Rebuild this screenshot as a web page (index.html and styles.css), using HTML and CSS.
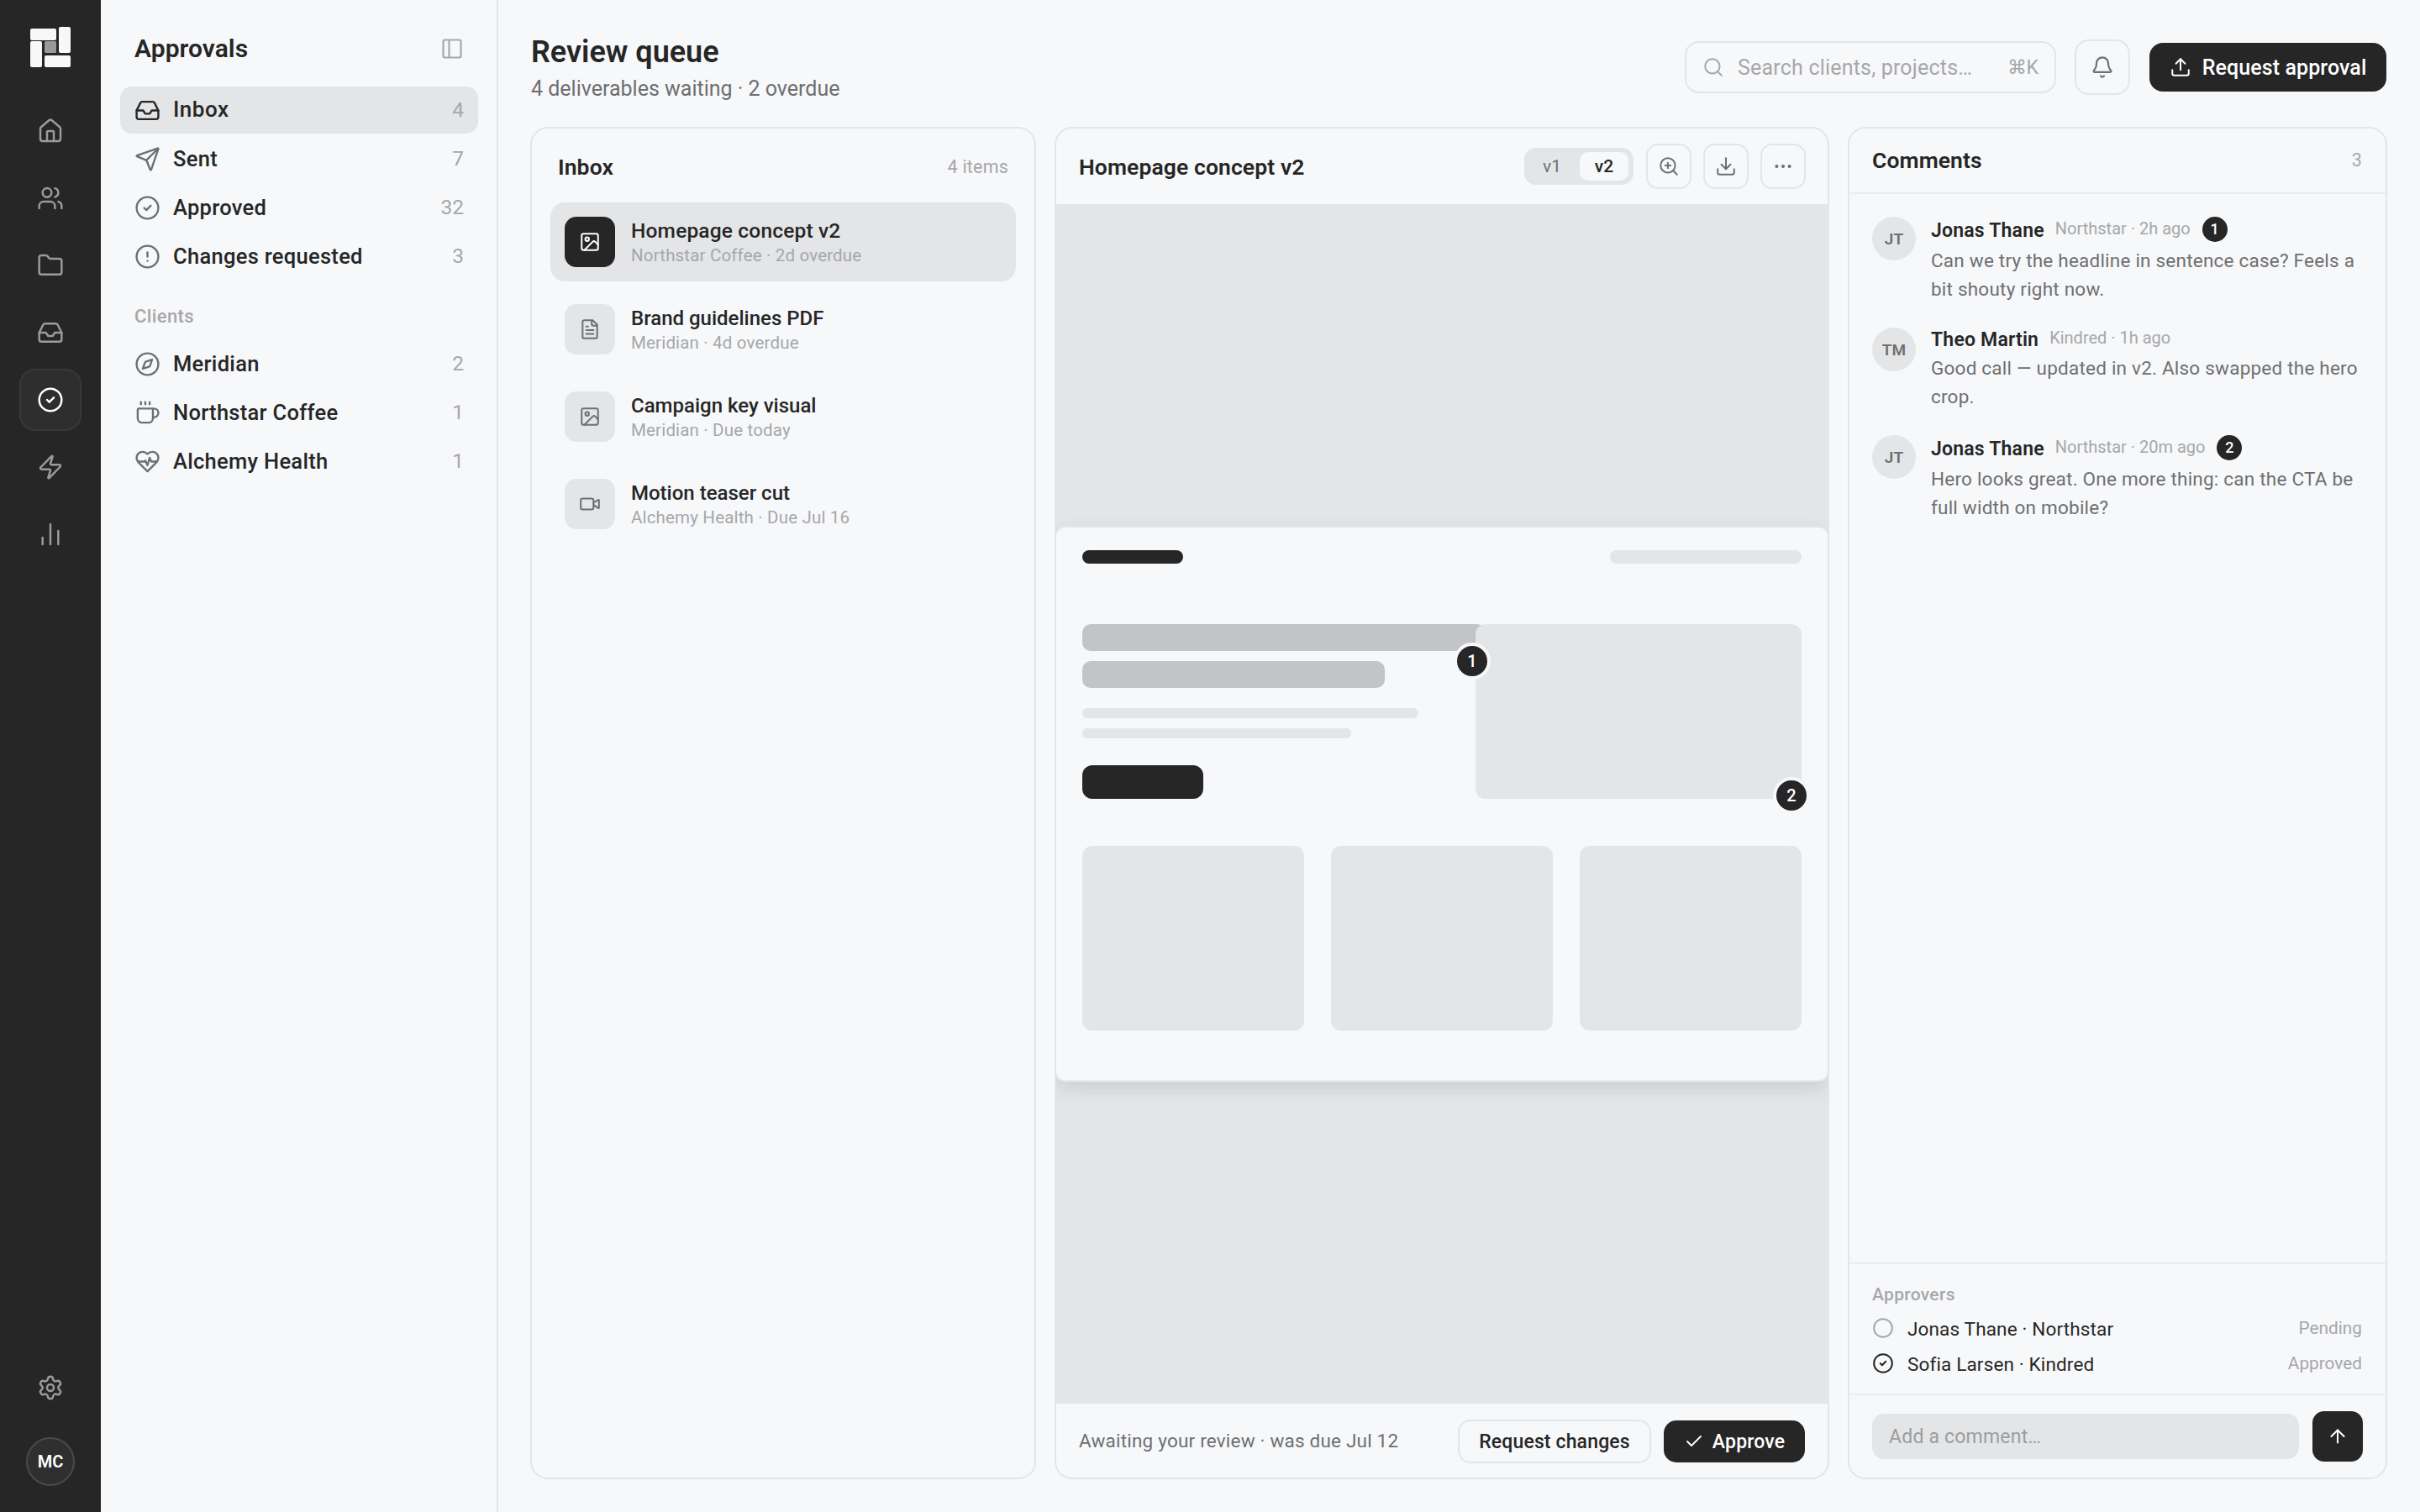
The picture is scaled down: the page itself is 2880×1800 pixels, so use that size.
FILE: index.html
```html
<!DOCTYPE html>
<html lang="en">
<head>
    <meta charset="UTF-8">
    <meta name="viewport" content="width=device-width, initial-scale=1.0">
    <title>Approvals</title>
    <link rel="stylesheet" href="styles.css">
</head>
<body>
    <svg class="sprite" aria-hidden="true">
        <symbol id="home" viewBox="0 0 24 24"><path d="M15 21v-8a1 1 0 0 0-1-1h-4a1 1 0 0 0-1 1v8"/><path d="M3 10a2 2 0 0 1 .709-1.528l7-5.999a2 2 0 0 1 2.582 0l7 5.999A2 2 0 0 1 21 10v9a2 2 0 0 1-2 2H5a2 2 0 0 1-2-2z"/></symbol>
        <symbol id="users" viewBox="0 0 24 24"><path d="M16 21v-2a4 4 0 0 0-4-4H6a4 4 0 0 0-4 4v2"/><circle cx="9" cy="7" r="4"/><path d="M22 21v-2a4 4 0 0 0-3-3.87"/><path d="M16 3.13a4 4 0 0 1 0 7.75"/></symbol>
        <symbol id="folder" viewBox="0 0 24 24"><path d="M20 20a2 2 0 0 0 2-2V8a2 2 0 0 0-2-2h-7.9a2 2 0 0 1-1.69-.9L9.6 3.9A2 2 0 0 0 7.93 3H4a2 2 0 0 0-2 2v13a2 2 0 0 0 2 2Z"/></symbol>
        <symbol id="inbox" viewBox="0 0 24 24"><path d="M22 12h-6l-2 3h-4l-2-3H2"/><path d="M5.45 5.11 2 12v6a2 2 0 0 0 2 2h16a2 2 0 0 0 2-2v-6l-3.45-6.89A2 2 0 0 0 16.76 4H7.24a2 2 0 0 0-1.79 1.11z"/></symbol>
        <symbol id="circle-check" viewBox="0 0 24 24"><circle cx="12" cy="12" r="10"/><path d="m9 12 2 2 4-4"/></symbol>
        <symbol id="circle" viewBox="0 0 24 24"><circle cx="12" cy="12" r="10"/></symbol>
        <symbol id="zap" viewBox="0 0 24 24"><path d="M4 14a1 1 0 0 1-.78-1.63l9.9-10.2a.5.5 0 0 1 .86.46l-1.92 6.02A1 1 0 0 0 13 10h7a1 1 0 0 1 .78 1.63l-9.9 10.2a.5.5 0 0 1-.86-.46l1.92-6.02A1 1 0 0 0 11 14z"/></symbol>
        <symbol id="bars" viewBox="0 0 24 24"><path d="M5 21v-6"/><path d="M12 21V3"/><path d="M19 21V9"/></symbol>
        <symbol id="settings" viewBox="0 0 24 24"><path d="M9.671 4.136a2.34 2.34 0 0 1 4.659 0 2.34 2.34 0 0 0 3.319 1.915 2.34 2.34 0 0 1 2.33 4.033 2.34 2.34 0 0 0 0 3.831 2.34 2.34 0 0 1-2.33 4.033 2.34 2.34 0 0 0-3.319 1.915 2.34 2.34 0 0 1-4.659 0 2.34 2.34 0 0 0-3.32-1.915 2.34 2.34 0 0 1-2.33-4.033 2.34 2.34 0 0 0 0-3.831A2.34 2.34 0 0 1 6.35 6.051a2.34 2.34 0 0 0 3.319-1.915"/><circle cx="12" cy="12" r="3"/></symbol>
        <symbol id="panel" viewBox="0 0 24 24"><rect x="3" y="3" width="18" height="18" rx="2"/><path d="M9 3v18"/></symbol>
        <symbol id="send" viewBox="0 0 24 24"><path d="M14.536 21.686a.5.5 0 0 0 .937-.024l6.5-19a.496.496 0 0 0-.635-.635l-19 6.5a.5.5 0 0 0-.024.937l7.93 3.18a2 2 0 0 1 1.112 1.11z"/><path d="m21.854 2.147-10.94 10.939"/></symbol>
        <symbol id="alert" viewBox="0 0 24 24"><circle cx="12" cy="12" r="10"/><path d="M12 8v4"/><path d="M12 16h.01"/></symbol>
        <symbol id="compass" viewBox="0 0 24 24"><path d="m16.24 7.76-1.804 5.411a2 2 0 0 1-1.265 1.265L7.76 16.24l1.804-5.411a2 2 0 0 1 1.265-1.265z"/><circle cx="12" cy="12" r="10"/></symbol>
        <symbol id="coffee" viewBox="0 0 24 24"><path d="M10 2v2"/><path d="M14 2v2"/><path d="M6 2v2"/><path d="M16 8a1 1 0 0 1 1 1v8a4 4 0 0 1-4 4H7a4 4 0 0 1-4-4V9a1 1 0 0 1 1-1h14a4 4 0 1 1 0 8h-1"/></symbol>
        <symbol id="heart" viewBox="0 0 24 24"><path d="M19 14c1.49-1.46 3-3.21 3-5.5A5.5 5.5 0 0 0 16.5 3c-1.76 0-3 .5-4.5 2-1.5-1.5-2.74-2-4.5-2A5.5 5.5 0 0 0 2 8.5c0 2.3 1.5 4.05 3 5.5l7 7Z"/><path d="M3.22 12H9.5l.5-1 2 4.5 2-7 1.5 3.5h5.27"/></symbol>
        <symbol id="search" viewBox="0 0 24 24"><circle cx="11" cy="11" r="8"/><path d="m21 21-4.34-4.34"/></symbol>
        <symbol id="bell" viewBox="0 0 24 24"><path d="M10.268 21a2 2 0 0 0 3.464 0"/><path d="M3.262 15.326A1 1 0 0 0 4 17h16a1 1 0 0 0 .74-1.673C19.41 13.956 18 12.499 18 8A6 6 0 0 0 6 8c0 4.499-1.411 5.956-2.738 7.326"/></symbol>
        <symbol id="upload" viewBox="0 0 24 24"><path d="M12 3v12"/><path d="m17 8-5-5-5 5"/><path d="M21 15v4a2 2 0 0 1-2 2H5a2 2 0 0 1-2-2v-4"/></symbol>
        <symbol id="download" viewBox="0 0 24 24"><path d="M12 15V3"/><path d="m7 10 5 5 5-5"/><path d="M21 15v4a2 2 0 0 1-2 2H5a2 2 0 0 1-2-2v-4"/></symbol>
        <symbol id="zoom" viewBox="0 0 24 24"><circle cx="11" cy="11" r="8"/><path d="m21 21-4.35-4.35"/><path d="M11 8v6"/><path d="M8 11h6"/></symbol>
        <symbol id="dots" viewBox="0 0 24 24"><circle cx="12" cy="12" r="1"/><circle cx="19" cy="12" r="1"/><circle cx="5" cy="12" r="1"/></symbol>
        <symbol id="image" viewBox="0 0 24 24"><rect x="3" y="3" width="18" height="18" rx="2"/><circle cx="9" cy="9" r="2"/><path d="m21 15-3.086-3.086a2 2 0 0 0-2.828 0L6 21"/></symbol>
        <symbol id="file" viewBox="0 0 24 24"><path d="M15 2H6a2 2 0 0 0-2 2v16a2 2 0 0 0 2 2h12a2 2 0 0 0 2-2V7Z"/><path d="M14 2v4a2 2 0 0 0 2 2h4"/><path d="M10 9H8"/><path d="M16 13H8"/><path d="M16 17H8"/></symbol>
        <symbol id="video" viewBox="0 0 24 24"><path d="m16 13 5.223 3.482a.5.5 0 0 0 .777-.416V7.87a.5.5 0 0 0-.752-.432L16 10.5"/><rect x="2" y="6" width="14" height="12" rx="2"/></symbol>
        <symbol id="check" viewBox="0 0 24 24"><path d="M20 6 9 17l-5-5"/></symbol>
        <symbol id="arrow-up" viewBox="0 0 24 24"><path d="m5 12 7-7 7 7"/><path d="M12 19V5"/></symbol>
    </svg>

    <div class="app">
        <nav class="rail">
            <svg class="logo" viewBox="0 0 48 48">
                <rect x="0" y="2" width="31" height="14" rx="2"/>
                <rect x="34" y="0" width="14" height="31" rx="2"/>
                <rect x="0" y="17" width="14" height="31" rx="2"/>
                <rect x="17" y="34" width="31" height="14" rx="2"/>
                <rect class="logo-core" x="17" y="17" width="14" height="14" rx="1.5"/>
            </svg>
            <div class="rail-links">
                <a class="rail-link"><svg class="icon i32"><use href="#home"/></svg></a>
                <a class="rail-link"><svg class="icon i32"><use href="#users"/></svg></a>
                <a class="rail-link"><svg class="icon i32"><use href="#folder"/></svg></a>
                <a class="rail-link"><svg class="icon i32"><use href="#inbox"/></svg></a>
                <a class="rail-link active"><svg class="icon i32"><use href="#circle-check"/></svg></a>
                <a class="rail-link"><svg class="icon i32"><use href="#zap"/></svg></a>
                <a class="rail-link"><svg class="icon i32"><use href="#bars"/></svg></a>
            </div>
            <div class="rail-bottom">
                <a class="rail-link"><svg class="icon i32"><use href="#settings"/></svg></a>
                <div class="me">MC</div>
            </div>
        </nav>

        <aside class="sidebar">
            <div class="sidebar-head">
                <h2>Approvals</h2>
                <svg class="icon i28"><use href="#panel"/></svg>
            </div>
            <ul class="nav">
                <li class="active"><svg class="icon"><use href="#inbox"/></svg><span>Inbox</span><em>4</em></li>
                <li><svg class="icon"><use href="#send"/></svg><span>Sent</span><em>7</em></li>
                <li><svg class="icon"><use href="#circle-check"/></svg><span>Approved</span><em>32</em></li>
                <li><svg class="icon"><use href="#alert"/></svg><span>Changes requested</span><em>3</em></li>
            </ul>
            <div class="nav-label">Clients</div>
            <ul class="nav">
                <li><svg class="icon"><use href="#compass"/></svg><span>Meridian</span><em>2</em></li>
                <li><svg class="icon"><use href="#coffee"/></svg><span>Northstar Coffee</span><em>1</em></li>
                <li><svg class="icon"><use href="#heart"/></svg><span>Alchemy Health</span><em>1</em></li>
            </ul>
        </aside>

        <main class="main">
            <header class="topbar">
                <div class="heading">
                    <h1>Review queue</h1>
                    <p>4 deliverables waiting · 2 overdue</p>
                </div>
                <div class="actions">
                    <div class="search">
                        <svg class="icon i26"><use href="#search"/></svg>
                        <span>Search clients, projects…</span>
                        <kbd>⌘K</kbd>
                    </div>
                    <button class="bell"><svg class="icon i28"><use href="#bell"/></svg></button>
                    <button class="primary"><svg class="icon i26"><use href="#upload"/></svg>Request approval</button>
                </div>
            </header>

            <div class="columns">
                <section class="panel queue">
                    <div class="queue-head">
                        <h3>Inbox</h3>
                        <span class="hint">4 items</span>
                    </div>
                    <div class="queue-list">
                        <div class="item active">
                            <div class="tile"><svg class="icon i26"><use href="#image"/></svg></div>
                            <div class="item-text"><strong>Homepage concept v2</strong><small>Northstar Coffee · 2d overdue</small></div>
                        </div>
                        <div class="item">
                            <div class="tile"><svg class="icon i26"><use href="#file"/></svg></div>
                            <div class="item-text"><strong>Brand guidelines PDF</strong><small>Meridian · 4d overdue</small></div>
                        </div>
                        <div class="item">
                            <div class="tile"><svg class="icon i26"><use href="#image"/></svg></div>
                            <div class="item-text"><strong>Campaign key visual</strong><small>Meridian · Due today</small></div>
                        </div>
                        <div class="item">
                            <div class="tile"><svg class="icon i26"><use href="#video"/></svg></div>
                            <div class="item-text"><strong>Motion teaser cut</strong><small>Alchemy Health · Due Jul 16</small></div>
                        </div>
                    </div>
                </section>

                <section class="panel preview">
                    <div class="preview-head">
                        <h3>Homepage concept v2</h3>
                        <div class="versions"><span>v1</span><span class="on">v2</span></div>
                        <button class="tool"><svg class="icon i26"><use href="#zoom"/></svg></button>
                        <button class="tool"><svg class="icon i26"><use href="#download"/></svg></button>
                        <button class="tool"><svg class="icon i26"><use href="#dots"/></svg></button>
                    </div>
                    <div class="canvas">
                        <div class="mock">
                            <div class="mock-top">
                                <div class="mock-logo"></div>
                                <div class="mock-menu"></div>
                            </div>
                            <div class="mock-hero">
                                <div class="mock-copy">
                                    <div class="mock-title"></div>
                                    <div class="mock-title short"></div>
                                    <div class="mock-line"></div>
                                    <div class="mock-line short"></div>
                                    <div class="mock-cta"></div>
                                </div>
                                <div class="mock-image"></div>
                            </div>
                            <div class="mock-cards">
                                <div></div>
                                <div></div>
                                <div></div>
                            </div>
                            <span class="pin pin-1">1</span>
                            <span class="pin pin-2">2</span>
                        </div>
                    </div>
                    <div class="preview-foot">
                        <p>Awaiting your review · was due Jul 12</p>
                        <button class="secondary">Request changes</button>
                        <button class="approve"><svg class="icon i24"><use href="#check"/></svg>Approve</button>
                    </div>
                </section>

                <section class="panel comments">
                    <div class="comments-head">
                        <h3>Comments</h3>
                        <span class="hint">3</span>
                    </div>
                    <div class="thread">
                        <article class="comment">
                            <div class="avatar">JT</div>
                            <div>
                                <div class="comment-head"><b>Jonas Thane</b><time>Northstar · 2h ago</time><i class="badge">1</i></div>
                                <p>Can we try the headline in sentence case? Feels a<br>bit shouty right now.</p>
                            </div>
                        </article>
                        <article class="comment">
                            <div class="avatar">TM</div>
                            <div>
                                <div class="comment-head"><b>Theo Martin</b><time>Kindred · 1h ago</time></div>
                                <p>Good call — updated in v2. Also swapped the hero<br>crop.</p>
                            </div>
                        </article>
                        <article class="comment">
                            <div class="avatar">JT</div>
                            <div>
                                <div class="comment-head"><b>Jonas Thane</b><time>Northstar · 20m ago</time><i class="badge">2</i></div>
                                <p>Hero looks great. One more thing: can the CTA be<br>full width on mobile?</p>
                            </div>
                        </article>
                    </div>
                    <div class="approvers">
                        <h4>Approvers</h4>
                        <div class="approver"><svg class="icon i26"><use href="#circle"/></svg><span>Jonas Thane · Northstar</span><em>Pending</em></div>
                        <div class="approver done"><svg class="icon i26"><use href="#circle-check"/></svg><span>Sofia Larsen · Kindred</span><em>Approved</em></div>
                    </div>
                    <div class="composer">
                        <div class="field">Add a comment…</div>
                        <button class="send"><svg class="icon i26"><use href="#arrow-up"/></svg></button>
                    </div>
                </section>
            </div>
        </main>
    </div>
</body>
</html>
```
FILE: styles.css
```css
:root {
    --bg: #f7f8fa;
    --ink: #262626;
    --mid: #6e6f70;
    --soft: #a6a7a8;
    --fill: #e4e5e7;
    --line: #e4e5e7;
    --hair: #ebecee;
}

* { box-sizing: border-box; }

body {
    margin: 0;
    background: var(--bg);
    color: var(--ink);
    font-family: Roboto, "Liberation Sans", sans-serif;
    font-size: 24px;
    line-height: 1.2;
}

h1, h2, h3, h4, p, ul { margin: 0; padding: 0; }
ul { list-style: none; }
em, i { font-style: normal; }
button {
    display: flex;
    align-items: center;
    justify-content: center;
    margin: 0;
    padding: 0;
    border: none;
    background: none;
    font-family: inherit;
    white-space: nowrap;
}

.sprite { position: absolute; width: 0; height: 0; }
.icon {
    flex: none;
    width: 31px;
    height: 31px;
    fill: none;
    stroke: currentColor;
    stroke-width: 1.85;
    stroke-linecap: round;
    stroke-linejoin: round;
}
.i24 { width: 24px; height: 24px; }
.i26 { width: 26px; height: 26px; }
.i28 { width: 28px; height: 28px; }
.i32 { width: 32px; height: 32px; }

.app { display: flex; width: 2880px; height: 1800px; overflow: hidden; }

/* rail */
.rail {
    display: flex;
    flex-direction: column;
    align-items: center;
    width: 120px;
    padding: 32px 0 31px;
    background: var(--ink);
}
.logo { width: 48px; height: 48px; fill: var(--bg); }
.logo-core { fill: #999; }
.rail-links { display: flex; flex-direction: column; gap: 6px; margin-top: 39px; }
.rail-link {
    display: flex;
    align-items: center;
    justify-content: center;
    width: 74px;
    height: 74px;
    border: 2px solid transparent;
    border-radius: 19px;
    color: #9b9b9b;
}
.rail-link.active { background: #2e2e2e; border-color: #393939; color: #fff; }
.rail-bottom {
    display: flex;
    flex-direction: column;
    align-items: center;
    gap: 22px;
    margin-top: auto;
}
.me {
    width: 58px;
    height: 58px;
    border: 2px solid #4a4a4a;
    border-radius: 50%;
    background: #2f2f2f;
    color: #fff;
    font-size: 20px;
    font-weight: 600;
    line-height: 54px;
    text-align: center;
}

/* sidebar */
.sidebar {
    width: 473px;
    padding: 0 22px 0 23px;
    border-right: 2px solid var(--line);
}
.sidebar-head {
    display: flex;
    align-items: center;
    justify-content: space-between;
    height: 103px;
    padding: 13px 17px 0;
    color: var(--soft);
}
.sidebar-head h2 { color: var(--ink); font-size: 30px; font-weight: 600; letter-spacing: .05px; }
.nav { display: flex; flex-direction: column; gap: 2px; }
.nav li {
    display: flex;
    align-items: center;
    gap: 15px;
    height: 56px;
    padding: 0 17px;
    border-radius: 14px;
    color: var(--mid);
}
.nav li span {
    flex: 1;
    color: var(--ink);
    font-size: 25.5px;
    font-weight: 500;
    letter-spacing: .3px;
}
.nav li em { color: var(--soft); font-size: 24.5px; }
.nav li.active { background: var(--fill); color: var(--ink); }
.nav li.active span { font-size: 26px; letter-spacing: .5px; }
.nav-label {
    height: 28px;
    margin: 30px 17px 14px;
    color: var(--soft);
    font-size: 22px;
    font-weight: 500;
    letter-spacing: .4px;
    line-height: 28px;
}

/* main */
.main { flex: 1; padding: 0 39px 0 38px; }
.topbar {
    display: flex;
    justify-content: space-between;
    height: 151px;
}
.heading { padding: 40px 0 0 1px; }
.heading h1 { font-size: 36px; font-weight: 600; line-height: 44px; }
.heading p {
    margin-top: 5px;
    color: var(--mid);
    font-size: 25px;
    line-height: 34px;
}
.actions {
    display: flex;
    align-items: center;
    gap: 22px;
    height: 66px;
    margin: 47px 1px 0 0;
}
.search {
    display: flex;
    align-items: center;
    width: 442px;
    height: 62px;
    padding: 0 19px;
    border: 2px solid var(--line);
    border-radius: 17px;
    color: var(--soft);
}
.search span {
    flex: 1;
    margin-left: 16px;
    padding-top: 1px;
    font-size: 25px;
    letter-spacing: .2px;
}
.search kbd { padding-top: 2px; font-family: inherit; font-size: 23px; }
.bell {
    width: 66px;
    height: 66px;
    border: 2px solid var(--line);
    border-radius: 17px;
    color: var(--mid);
}
.primary {
    gap: 13px;
    width: 282px;
    height: 58px;
    margin-left: 1px;
    border-radius: 16px;
    background: var(--ink);
    color: #fff;
    font-size: 25px;
    font-weight: 500;
    letter-spacing: .1px;
}

.columns { display: flex; gap: 22px; height: 1610px; }
.panel {
    display: flex;
    flex-direction: column;
    border: 2px solid var(--line);
    border-radius: 21px;
    overflow: hidden;
}
h3 { font-size: 26.5px; font-weight: 600; letter-spacing: .1px; }
.hint { color: var(--soft); font-size: 21.5px; letter-spacing: .2px; }

/* queue */
.queue { width: 602px; padding: 22px; }
.queue-head {
    display: flex;
    align-items: center;
    justify-content: space-between;
    height: 46px;
    margin-bottom: 20px;
    padding: 1px 9px 0;
}
.queue-list { display: flex; flex-direction: column; gap: 10px; }
.item {
    display: flex;
    align-items: center;
    gap: 19px;
    height: 94px;
    padding: 0 17px;
    border-radius: 17px;
}
.item.active { background: var(--fill); }
.tile {
    display: flex;
    align-items: center;
    justify-content: center;
    width: 60px;
    height: 60px;
    border-radius: 14px;
    background: var(--fill);
    color: var(--mid);
}
.item.active .tile { background: var(--ink); color: #fff; }
.item-text { display: flex; flex-direction: column; gap: 1px; padding-top: 1px; }
.item-text strong { font-size: 24px; font-weight: 500; line-height: 30px; }
.item.active strong { font-size: 24.5px; letter-spacing: .17px; }
.item-text small { color: var(--soft); font-size: 20.5px; letter-spacing: .17px; line-height: 26px; }

/* preview */
.preview { width: 922px; }
.preview-head {
    display: flex;
    align-items: center;
    height: 90px;
    padding: 0 26px 0 27px;
}
.preview-head h3 { flex: 1; padding-top: 1px; }
.versions {
    display: flex;
    gap: 6px;
    width: 130px;
    height: 44px;
    padding: 5px;
    margin-right: 1px;
    border-radius: 14px;
    background: var(--fill);
}
.versions span {
    width: 56px;
    color: var(--mid);
    font-size: 21px;
    line-height: 34px;
    text-align: center;
}
.versions .on {
    width: 58px;
    margin-left: -1px;
    border-radius: 10px;
    background: var(--bg);
    color: var(--ink);
    font-weight: 500;
}
.tool {
    width: 54px;
    height: 54px;
    margin-left: 14px;
    border: 2px solid var(--line);
    border-radius: 14px;
    color: var(--mid);
}
.canvas {
    display: flex;
    align-items: center;
    flex: 1;
    background: var(--fill);
}
.mock {
    position: relative;
    width: 918px;
    height: 658px;
    padding: 27px 31px 0;
    border-radius: 11px;
    background: var(--bg);
    box-shadow: 0 0 0 2px var(--line), 0 8px 24px rgba(0, 0, 0, .12);
}
.mock-top { display: flex; justify-content: space-between; }
.mock-logo, .mock-menu { height: 16px; border-radius: 8px; }
.mock-logo { width: 120px; background: var(--ink); }
.mock-menu { width: 228px; background: var(--fill); }
.mock-hero {
    display: grid;
    grid-template-columns: 468px 388px;
    height: 208px;
    margin-top: 72px;
}
.mock-title {
    width: 480px;
    height: 32px;
    margin-bottom: 12px;
    border-radius: 10px;
    background: #c3c4c6;
}
.mock-title.short { width: 360px; margin-bottom: 24px; }
.mock-line {
    width: 400px;
    height: 12px;
    margin-bottom: 12px;
    border-radius: 6px;
    background: var(--fill);
}
.mock-line.short { width: 320px; margin-bottom: 32px; }
.mock-cta { width: 144px; height: 40px; border-radius: 12px; background: var(--ink); }
.mock-image { border-radius: 12px; background: var(--fill); }
.mock-cards {
    display: grid;
    grid-template-columns: repeat(3, 1fr);
    gap: 32px;
    margin-top: 56px;
}
.mock-cards div { height: 220px; border-radius: 12px; background: var(--fill); }
.pin {
    position: absolute;
    width: 44px;
    height: 44px;
    border: 4px solid var(--bg);
    border-radius: 50%;
    background: var(--ink);
    color: #fff;
    font-size: 20px;
    font-weight: 500;
    line-height: 36px;
    text-align: center;
}
.pin-1 { left: 473px; top: 137px; }
.pin-2 { left: 853px; top: 297px; }
.preview-foot {
    display: flex;
    align-items: center;
    height: 88px;
    padding: 1px 27px 0;
}
.preview-foot p { flex: 1; color: var(--mid); font-size: 22.5px; letter-spacing: .2px; }
.secondary, .approve {
    padding-top: 1px;
    border-radius: 15px;
    color: var(--ink);
    font-size: 23px;
    font-weight: 500;
    letter-spacing: .15px;
}
.secondary { width: 230px; height: 52px; border: 2px solid var(--line); }
.approve {
    gap: 10px;
    width: 168px;
    height: 50px;
    margin-left: 15px;
    background: var(--ink);
    color: #fff;
}

/* comments */
.comments { width: 642px; }
.comments-head {
    display: flex;
    align-items: center;
    justify-content: space-between;
    height: 78px;
    padding: 0 28px 0 27px;
    border-bottom: 2px solid var(--hair);
}
.thread {
    display: flex;
    flex-direction: column;
    flex: 1;
    gap: 28px;
    padding: 27px;
}
.comment { display: flex; gap: 18px; }
.avatar {
    flex: none;
    width: 52px;
    height: 52px;
    border-radius: 50%;
    background: var(--fill);
    color: var(--mid);
    font-size: 19px;
    font-weight: 600;
    line-height: 53px;
    text-align: center;
}
.comment-head { display: flex; align-items: center; height: 30px; margin-bottom: 5px; }
.comment:nth-child(2) .comment-head { height: 26px; }
.comment-head b {
    padding-top: 3px;
    font-size: 23px;
    font-weight: 600;
    letter-spacing: .2px;
    line-height: 26px;
}
.comment-head time {
    margin-left: 13px;
    padding-bottom: 2px;
    color: var(--soft);
    font-size: 20px;
    line-height: 23px;
}
.badge {
    width: 30px;
    height: 30px;
    margin-left: 14px;
    border-radius: 50%;
    background: var(--ink);
    color: #fff;
    font-size: 18px;
    font-weight: 500;
    line-height: 30px;
    text-align: center;
}
.comment p {
    margin-bottom: 1px;
    color: var(--mid);
    font-size: 22.5px;
    letter-spacing: .22px;
    line-height: 34px;
    white-space: nowrap;
}
.approvers {
    height: 156px;
    padding: 22px 28px 0 27px;
    border-top: 2px solid var(--hair);
}
.approvers h4 {
    margin-bottom: 5px;
    color: var(--soft);
    font-size: 21px;
    font-weight: 500;
    letter-spacing: .3px;
    line-height: 28px;
}
.approver {
    display: flex;
    align-items: center;
    height: 42px;
    color: var(--soft);
}
.approver.done { color: var(--ink); }
.approver span {
    flex: 1;
    margin-left: 16px;
    padding-top: 2px;
    color: var(--ink);
    font-size: 22.5px;
    letter-spacing: .15px;
}
.approver em { padding-top: 1px; color: var(--soft); font-size: 20.8px; }
.composer {
    display: flex;
    align-items: center;
    gap: 16px;
    height: 100px;
    padding: 0 27px;
    border-top: 2px solid var(--hair);
}
.field {
    flex: 1;
    height: 54px;
    padding: 0 20px;
    border-radius: 14px;
    background: var(--fill);
    color: #9c9d9e;
    font-size: 23px;
    letter-spacing: .2px;
    line-height: 56px;
}
.send { width: 60px; height: 60px; border-radius: 14px; background: var(--ink); color: #fff; }
```
